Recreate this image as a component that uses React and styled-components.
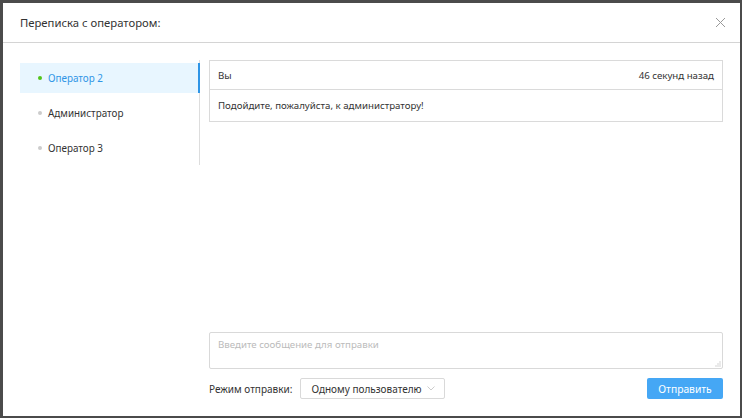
import React from 'react';
import styled, { createGlobalStyle } from 'styled-components';

const GlobalStyle = createGlobalStyle`
  html, body { margin: 0; padding: 0; }
  body {
    width: 742px;
    height: 418px;
    overflow: hidden;
    background: #4b4b4b;
    font-family: "Noto Sans", "Open Sans", sans-serif;
    color: #333;
  }
`;

const Backdrop = styled.div`
  width: 742px;
  height: 418px;
  padding: 3px 2px 2px 3px;
  box-sizing: border-box;
  display: flex;
`;

const Modal = styled.div`
  flex: 1;
  background: #fff;
  display: flex;
  flex-direction: column;
`;

const Header = styled.div`
  height: 39px;
  border-bottom: 1px solid #d4d4d4;
  display: flex;
  align-items: center;
  justify-content: space-between;
  padding: 0 14px 0 17px;
`;

const Title = styled.div`
  font-size: 11.3px;
  color: #333;
`;

const Close = styled.div`
  display: flex;
`;

const Body = styled.div`
  flex: 1;
  display: grid;
  grid-template-columns: 180px 1fr;
  column-gap: 9px;
  padding: 17px;
`;

const List = styled.div`
  align-self: start;
  border-right: 1px solid #ddd;
  padding-top: 3px;
  padding-bottom: 2px;
  display: flex;
  flex-direction: column;
  gap: 5px;
`;

const Item = styled.div`
  height: 30px;
  display: flex;
  align-items: center;
  padding-left: 18px;
  gap: 6px;
  font-size: 9.9px;
  color: ${p => (p.$active ? '#2f95e6' : '#333')};
  background: ${p => (p.$active ? '#e8f6ff' : 'transparent')};
  margin-right: -1px;
  border-right: 2px solid ${p => (p.$active ? '#2f95e6' : 'transparent')};
`;

const Dot = styled.span`
  width: 4px;
  height: 4px;
  border-radius: 50%;
  background: ${p => (p.$active ? '#52c41a' : '#ccc')};
`;

const Main = styled.div`
  display: flex;
  flex-direction: column;
`;

const Messages = styled.div`
  flex: 1;
`;

const Card = styled.div`
  border: 1px solid #dadada;
  font-size: 9.7px;
  color: #333;
`;

const CardHead = styled.div`
  height: 28px;
  display: flex;
  align-items: center;
  justify-content: space-between;
  padding: 0 8px;
  border-bottom: 1px solid #dadada;
`;

const CardText = styled.div`
  height: 31px;
  display: flex;
  align-items: center;
  padding: 0 8px;
`;

const Input = styled.div`
  position: relative;
  height: 37px;
  border: 1px solid #d9d9d9;
  border-radius: 2px;
  box-sizing: border-box;
  padding: 5px 8px;
  font-size: 9.7px;
  color: #bbb;
`;

const Grip = styled.svg`
  position: absolute;
  right: 1px;
  bottom: 1px;
`;

const Footer = styled.div`
  margin-top: 9px;
  height: 21px;
  display: flex;
  align-items: center;
  font-size: 10px;
  color: #333;
`;

const Label = styled.span`
  margin-right: 8px;
  white-space: nowrap;
`;

const Select = styled.div`
  width: 145px;
  height: 21px;
  border: 1px solid #d9d9d9;
  border-radius: 2px;
  box-sizing: border-box;
  display: flex;
  align-items: center;
  justify-content: space-between;
  padding: 0 9px 0 10px;
  white-space: nowrap;
`;

const Button = styled.div`
  margin-left: auto;
  width: 76px;
  height: 21px;
  border-radius: 2px;
  background: #45a7f5;
  color: #fff;
  display: flex;
  align-items: center;
  justify-content: center;
  font-size: 10.3px;
`;

const operators = [
  { name: 'Оператор 2', active: true },
  { name: 'Администратор' },
  { name: 'Оператор 3' },
];

export default function App() {
  return (
    <>
      <GlobalStyle />
      <Backdrop>
        <Modal>
          <Header>
            <Title>Переписка с оператором:</Title>
            <Close>
              <svg width="11" height="11" viewBox="0 0 11 11">
                <path d="M1 1L10 10M10 1L1 10" stroke="#999" strokeWidth="1" />
              </svg>
            </Close>
          </Header>
          <Body>
            <List>
              {operators.map(op => (
                <Item key={op.name} $active={op.active}>
                  <Dot $active={op.active} />
                  {op.name}
                </Item>
              ))}
            </List>
            <Main>
              <Messages>
                <Card>
                  <CardHead>
                    <span>Вы</span>
                    <span>46 секунд назад</span>
                  </CardHead>
                  <CardText>Подойдите, пожалуйста, к администратору!</CardText>
                </Card>
              </Messages>
              <Input>
                Введите сообщение для отправки
                <Grip width="6" height="6" viewBox="0 0 6 6">
                  <path d="M5 1v0M5 3v0M5 5v0M3 3v0M3 5v0M1 5v0" stroke="#aaa" strokeWidth="1" strokeLinecap="square" />
                </Grip>
              </Input>
              <Footer>
                <Label>Режим отправки:</Label>
                <Select>
                  <span>Одному пользователю</span>
                  <svg width="8" height="5" viewBox="0 0 8 5">
                    <path d="M0.5 0.5L4 4L7.5 0.5" fill="none" stroke="#ccc" strokeWidth="1" />
                  </svg>
                </Select>
                <Button>Отправить</Button>
              </Footer>
            </Main>
          </Body>
        </Modal>
      </Backdrop>
    </>
  );
}
